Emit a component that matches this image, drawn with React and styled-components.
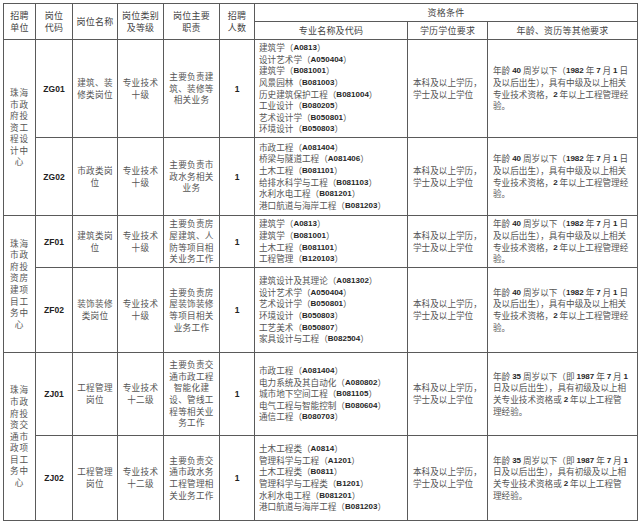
import React from "react";
import styled, { createGlobalStyle } from "styled-components";

const Global = createGlobalStyle`
  html, body { margin: 0; padding: 0; background: #ffffff; }
  body { width: 640px; height: 524px; overflow: hidden; }
`;

const Page = styled.div`
  padding: 3px 0 0 3px;
  font-family: "Noto Sans CJK SC", "Noto Sans", sans-serif;
  color: #555555;
`;

const Table = styled.table`
  border-collapse: collapse;
  table-layout: fixed;
  width: 634px;
  border: 1.5px solid #4d4d4d;
`;

const Col = styled.col`
  width: ${(p) => p.$w}px;
`;

const HeadRow = styled.tr`
  height: ${(p) => p.$h}px;
`;

const Row = styled.tr`
  height: ${(p) => p.$h}px;
`;

const Head = styled.th`
  border: 1px solid #5a5a5a;
  padding: 0;
  font-weight: 400;
  font-size: 9px;
  line-height: 11.6px;
  color: #444;
  text-align: center;
  vertical-align: middle;
  letter-spacing: 0.2px;
`;

const Cell = styled.td`
  border: 1px solid #5a5a5a;
  padding: ${(p) => (p.$left ? `0 2px 0 ${p.$pl || 4}px` : "0 1px")};
  font-size: 8.6px;
  line-height: 11.6px;
  text-align: ${(p) => (p.$left ? "left" : "center")};
  vertical-align: middle;
  letter-spacing: ${(p) => (p.$left ? "0" : p.$wide ? "1px" : "0.3px")};
  overflow: hidden;
`;

const Code = styled.span`
  font-family: "Liberation Sans", Arial, sans-serif;
  font-weight: 700;
  font-size: 8.5px;
  line-height: 1;
  color: #222;
  letter-spacing: 0;
`;

const Latin = styled.span`
  font-family: "Liberation Sans", Arial, sans-serif;
  font-weight: 700;
  font-size: 8px;
  line-height: 1;
  color: #262626;
  vertical-align: 1.5px;
`;

const Line = styled.div`
  white-space: nowrap;
  height: 11.6px;
  line-height: 11.6px;
`;

function Rich({ text }) {
  const parts = text.split(/([A-Za-z0-9]+)/);
  return (
    <>
      {parts.map((p, i) =>
        /^[A-Za-z0-9]+$/.test(p) ? <Latin key={i}>{p}</Latin> : <React.Fragment key={i}>{p}</React.Fragment>
      )}
    </>
  );
}

function Lines({ items }) {
  return items.map((t, i) => (
    <Line key={i}>
      <Rich text={t} />
    </Line>
  ));
}

const EDU = ["本科及以上学历，", "学士及以上学位"];
const AGE40 = [
  "年龄 40 周岁以下（1982 年 7 月 1 日",
  "及以后出生），具有中级及以上相关",
  "专业技术资格，2 年以上工程管理经",
  "验。",
];
const AGE35 = [
  "年龄 35 周岁以下（即 1987 年 7 月 1",
  "日及以后出生），具有初级及以上相",
  "关专业技术资格或 2 年以上工程管",
  "理经验。",
];

const groups = [
  {
    unit: ["珠海", "市政", "府投", "资工", "程设", "计中", "心"],
    rows: [
      {
        h: 98,
        code: "ZG01",
        name: ["建筑、装", "修类岗位"],
        level: ["专业技术", "十级"],
        duty: ["主要负责建", "筑、装修等", "相关业务"],
        majors: [
          "建筑学（A0813）",
          "设计艺术学（A050404）",
          "建筑学（B081001）",
          "风景园林（B081003）",
          "历史建筑保护工程（B081004）",
          "工业设计（B080205）",
          "艺术设计学（B050801）",
          "环境设计（B050803）",
        ],
        age: AGE40,
      },
      {
        h: 78,
        code: "ZG02",
        name: ["市政类岗", "位"],
        level: ["专业技术", "十级"],
        duty: ["主要负责市", "政水务相关", "业务"],
        majors: [
          "市政工程（A081404）",
          "桥梁与隧道工程（A081406）",
          "土木工程（B081101）",
          "给排水科学与工程（B081103）",
          "水利水电工程（B081201）",
          "港口航道与海岸工程（B081203）",
        ],
        age: AGE40,
      },
    ],
  },
  {
    unit: ["珠海", "市政", "府投", "资房", "建项", "目工", "务中", "心"],
    rows: [
      {
        h: 52,
        code: "ZF01",
        name: ["建筑类岗", "位"],
        level: ["专业技术", "十级"],
        duty: ["主要负责房", "屋建筑、人", "防等项目相", "关业务工作"],
        majors: [
          "建筑学（A0813）",
          "建筑学（B081001）",
          "土木工程（B081101）",
          "工程管理（B120103）",
        ],
        age: AGE40,
      },
      {
        h: 85,
        code: "ZF02",
        name: ["装饰装修", "类岗位"],
        level: ["专业技术", "十级"],
        duty: ["主要负责房", "屋装饰装修", "等项目相关", "业务工作"],
        majors: [
          "建筑设计及其理论（A081302）",
          "设计艺术学（A050404）",
          "艺术设计学（B050801）",
          "环境设计（B050803）",
          "工艺美术（B050807）",
          "家具设计与工程（B082504）",
        ],
        age: AGE40,
      },
    ],
  },
  {
    unit: ["珠海", "市政", "府投", "资交", "通市", "政项", "目工", "务中", "心"],
    rows: [
      {
        h: 83,
        code: "ZJ01",
        name: ["工程管理", "岗位"],
        level: ["专业技术", "十二级"],
        duty: ["主要负责交", "通市政工程", "智能化建", "设、管线工", "程等相关业", "务工作"],
        majors: [
          "市政工程（A081404）",
          "电力系统及其自动化（A080802）",
          "城市地下空间工程（B081105）",
          "电气工程与智能控制（B080604）",
          "通信工程（B080703）",
        ],
        age: AGE35,
      },
      {
        h: 85,
        code: "ZJ02",
        name: ["工程管理", "岗位"],
        level: ["专业技术", "十二级"],
        duty: ["主要负责交", "通市政水务", "工程管理相", "关业务工作"],
        majors: [
          "土木工程类（A0814）",
          "管理科学与工程（A1201）",
          "土木工程类（B0811）",
          "管理科学与工程类（B1201）",
          "水利水电工程（B081201）",
          "港口航道与海岸工程（B081203）",
        ],
        age: AGE35,
      },
    ],
  },
];

const widths = [32, 37, 45, 46, 56, 35, 153, 80, 150];

export default function App() {
  return (
    <>
      <Global />
      <Page>
        <Table>
          <colgroup>
            {widths.map((w, i) => (
              <Col key={i} $w={w} />
            ))}
          </colgroup>
          <thead>
            <HeadRow $h={18}>
              <Head rowSpan={2}>
                <Line>招聘</Line>
                <Line>单位</Line>
              </Head>
              <Head rowSpan={2}>
                <Line>岗位</Line>
                <Line>代码</Line>
              </Head>
              <Head rowSpan={2}>岗位名称</Head>
              <Head rowSpan={2}>
                <Line>岗位类别</Line>
                <Line>及等级</Line>
              </Head>
              <Head rowSpan={2}>
                <Line>岗位主要</Line>
                <Line>职责</Line>
              </Head>
              <Head rowSpan={2}>
                <Line>招聘</Line>
                <Line>人数</Line>
              </Head>
              <Head colSpan={3}>资格条件</Head>
            </HeadRow>
            <HeadRow $h={18}>
              <Head>专业名称及代码</Head>
              <Head>学历学位要求</Head>
              <Head>年龄、资历等其他要求</Head>
            </HeadRow>
          </thead>
          <tbody>
            {groups.map((g, gi) =>
              g.rows.map((r, ri) => (
                <Row key={`${gi}-${ri}`} $h={r.h}>
                  {ri === 0 && (
                    <Cell rowSpan={g.rows.length} $wide>
                      <Lines items={g.unit} />
                    </Cell>
                  )}
                  <Cell>
                    <Code>{r.code}</Code>
                  </Cell>
                  <Cell>
                    <Lines items={r.name} />
                  </Cell>
                  <Cell>
                    <Lines items={r.level} />
                  </Cell>
                  <Cell>
                    <Lines items={r.duty} />
                  </Cell>
                  <Cell>
                    <Code>1</Code>
                  </Cell>
                  <Cell $left $pl={4}>
                    <Lines items={r.majors} />
                  </Cell>
                  <Cell $left $pl={5}>
                    <Lines items={EDU} />
                  </Cell>
                  <Cell $left $pl={5}>
                    <Lines items={r.age} />
                  </Cell>
                </Row>
              ))
            )}
          </tbody>
        </Table>
      </Page>
    </>
  );
}
